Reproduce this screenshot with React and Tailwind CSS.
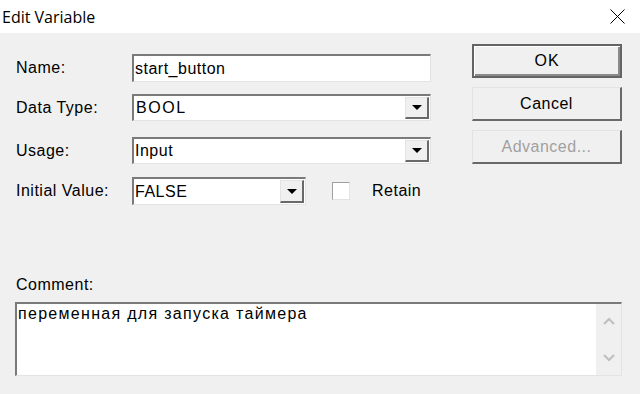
import React from "react";

function Arrow() {
  return (
    <svg width="10" height="5" viewBox="0 0 10 5">
      <path d="M0 0H10L5 5Z" fill="#000" />
    </svg>
  );
}

function DropBtn() {
  return (
    <div className="ml-auto mr-[1px] my-[1px] w-[24px] flex items-center justify-center bg-[#f0f0f0] border-t border-l border-t-[#e3e3e3] border-l-[#e3e3e3] border-b-2 border-r-2 border-b-[#696969] border-r-[#696969]">
      <Arrow />
    </div>
  );
}

function Combo({ value, width, height = 27, wide = false }) {
  return (
    <div
      className="flex bg-white border-t-2 border-l-2 border-t-[#7a7a7a] border-l-[#7a7a7a] border-b border-r border-b-[#e3e3e3] border-r-[#e3e3e3]"
      style={{ width, height }}
    >
      <div className={wide ? "flex items-center pl-[2px] text-[16px] tracking-[1.6px] text-black" : "flex items-center pl-[1px] text-[16px] tracking-[0.5px] text-black"}>{value}</div>
      <DropBtn />
    </div>
  );
}

function Label({ children }) {
  return (
    <div className="w-[116px] text-[16px] tracking-[0.5px] text-black leading-none">{children}</div>
  );
}

export default function App() {
  return (
    <div className="w-[640px] h-[394px] bg-[#f0f0f0] flex flex-col font-['Liberation_Sans',Arial,sans-serif] overflow-hidden">
      <div className="h-[33px] bg-white flex items-center justify-between pl-[2px] shrink-0">
        <span className="font-['Open_Sans',sans-serif] text-[16px] text-black leading-none">Edit Variable</span>
        <div className="w-[46px] h-[33px] flex items-center justify-center">
          <svg width="15" height="15" viewBox="0 0 15 15">
            <path d="M0.5 0.5L14.5 14.5M14.5 0.5L0.5 14.5" stroke="#000" strokeWidth="1" />
          </svg>
        </div>
      </div>

      <div className="flex h-[172px] shrink-0">
        <div className="flex flex-col pl-[16px] pt-[21px] w-[472px]">
          <div className="flex items-center">
            <Label>Name:</Label>
            <div className="w-[299px] h-[28px] flex items-center bg-white pl-[1px] border-t-2 border-l-2 border-t-[#7a7a7a] border-l-[#7a7a7a] border-b border-r border-b-[#e3e3e3] border-r-[#e3e3e3] text-[16px] tracking-[0.5px] text-black">
              start_button
            </div>
          </div>
          <div className="flex items-center mt-[12px]">
            <Label>Data Type:</Label>
            <Combo value="BOOL" width={299} wide />
          </div>
          <div className="flex items-center mt-[16px]">
            <Label>Usage:</Label>
            <Combo value="Input" width={299} />
          </div>
          <div className="flex items-center mt-[13px]">
            <Label>Initial Value:</Label>
            <Combo value="FALSE" width={174} height={28} />
            <div className="ml-[26px] w-[18px] h-[18px] bg-white border-t border-l border-t-[#a0a0a0] border-l-[#a0a0a0] border-b border-r border-b-[#e3e3e3] border-r-[#e3e3e3]" />
            <span className="ml-[22px] text-[16px] tracking-[0.5px] text-black leading-none">Retain</span>
          </div>
        </div>

        <div className="flex flex-col pt-[11px] w-[150px] gap-[9px]">
          <div className="h-[34px] flex items-center justify-center bg-[#f0f0f0] border-2 border-[#646464] shadow-[inset_1px_1px_0_#ffffff,inset_-2px_-2px_0_#8a8a8a] text-[16px] tracking-[1px] text-black">
            OK
          </div>
          <div className="h-[34px] flex items-center justify-center bg-[#f0f0f0] border-t border-l border-t-[#e3e3e3] border-l-[#e3e3e3] border-b-2 border-r-2 border-b-[#696969] border-r-[#696969] text-[16px] tracking-[0.5px] text-black">
            Cancel
          </div>
          <div className="h-[34px] flex items-center justify-center bg-[#f0f0f0] border-t border-l border-t-[#e3e3e3] border-l-[#e3e3e3] border-b-2 border-r-2 border-b-[#696969] border-r-[#696969] text-[16px] tracking-[0.5px] text-[#a0a0a0]">
            Advanced...
          </div>
        </div>
      </div>

      <div className="mt-[71px] pl-[16px] h-[18px] flex items-center text-[16px] tracking-[0.5px] text-black leading-none">
        Comment:
      </div>

      <div className="mt-[8px] ml-[15px] w-[607px] h-[74px] flex bg-white border-t-2 border-l-2 border-t-[#7a7a7a] border-l-[#7a7a7a] border-b border-r border-b-[#e3e3e3] border-r-[#e3e3e3]">
        <div className="flex-1 pl-[1px] pt-[0px] text-[16px] tracking-[1.3px] text-black leading-[20px]">
          переменная для запуска таймера
        </div>
        <div className="w-[25px] bg-[#f0f0f0] flex flex-col items-center justify-between py-[13px]">
          <svg width="12" height="8" viewBox="0 0 12 8">
            <path d="M1 7L6 2L11 7" stroke="#c0c0c0" strokeWidth="2.2" fill="none" />
          </svg>
          <svg width="12" height="8" viewBox="0 0 12 8">
            <path d="M1 1L6 6L11 1" stroke="#c0c0c0" strokeWidth="2.2" fill="none" />
          </svg>
        </div>
      </div>
    </div>
  );
}
